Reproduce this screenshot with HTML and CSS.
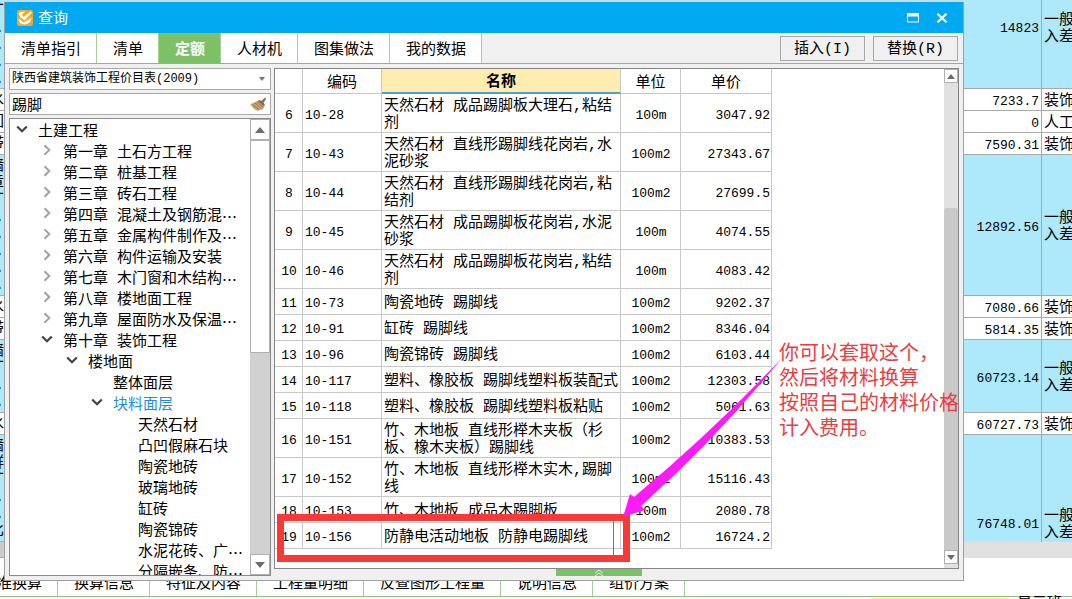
FILE: index.html
```html
<!DOCTYPE html>
<html lang="zh-CN">
<head>
<meta charset="utf-8">
<title>查询</title>
<link rel="stylesheet" href="styles.css">
</head>
<body>
<svg class="defs" aria-hidden="true">
  <symbol id="down" viewBox="0 0 12 12"><path d="M1.2 3.5 6 8.3 10.8 3.5" fill="none" stroke="#444" stroke-width="2.2"/></symbol>
  <symbol id="right" viewBox="0 0 12 12"><path d="M3.5 1.2 8.3 6 3.5 10.8" fill="none" stroke="#a2a2a2" stroke-width="2"/></symbol>
  <symbol id="tri-up" viewBox="0 0 10 6"><path d="M0 6 5 0l5 6z" fill="#6c6c6c"/></symbol>
  <symbol id="tri-down" viewBox="0 0 10 6"><path d="M0 0 5 6l5-6z" fill="#6c6c6c"/></symbol>
</svg>

<main class="app">
  <div class="sheet">
    <div class="edge">
      <div class="edge-cell cyan h89"><span>丁</span><span>.</span><span>.</span><span>.</span><span>.</span></div>
      <div class="edge-cell h22"><span>水</span></div>
      <div class="edge-cell h22"><span>回</span></div>
      <div class="edge-cell h22"><span>带</span></div>
      <div class="edge-cell cyan h141"><span>墙</span><span>章</span><span>丁</span><span>.</span><span>.</span><span>.</span><span>.</span><span>.</span></div>
      <div class="edge-cell h22"><span>水</span></div>
      <div class="edge-cell h22"><span>带</span></div>
      <div class="edge-cell cyan h73"><span>墙</span><span>丁</span><span>.</span><span>.</span></div>
      <div class="edge-cell h22"><span>水</span></div>
      <div class="edge-cell cyan h107"><span>墙</span><span>群</span><span>丁</span><span>.</span><span>.</span><span>比</span></div>
      <div class="edge-cell gray"></div>
    </div>
    <table class="costs">
      <tbody>
        <tr class="cyan h89 high"><td class="amount">14823</td><td>一般计<br>入差价</td></tr>
        <tr class="h22"><td class="amount">7233.7</td><td>装饰</td></tr>
        <tr class="h22"><td class="amount">0</td><td>人工</td></tr>
        <tr class="h22"><td class="amount">7590.31</td><td>装饰</td></tr>
        <tr class="cyan h141"><td class="amount">12892.56</td><td>一般计<br>入差价</td></tr>
        <tr class="h22"><td class="amount">7080.66</td><td>装饰</td></tr>
        <tr class="h22"><td class="amount">5814.35</td><td>装饰</td></tr>
        <tr class="cyan h73"><td class="amount">60723.14</td><td>一般计<br>入差价</td></tr>
        <tr class="h22"><td class="amount">60727.73</td><td>装饰</td></tr>
        <tr class="cyan h107 low"><td class="amount">76748.01</td><td>一般计<br>入差价</td></tr>
        <tr class="gray"><td></td><td></td></tr>
      </tbody>
    </table>
  </div>
  <nav class="strip">
    <button>标准换算</button><button>换算信息</button><button>特征及内容</button><button>工程量明细</button><button>反查图形工程量</button><button>说明信息</button><button>组价方案</button>
  </nav>
  <div class="subhead"><span class="mark"></span><span class="subtext">显示班</span></div>
</main>

<section class="dialog" role="dialog" aria-labelledby="title">
  <header class="titlebar">
    <svg class="logo" viewBox="0 0 16 16"><rect width="16" height="16" rx="2" fill="#f5a623"/><path d="M1.6 3.6C3 2 5.6 1.2 8.4 1.6L5 4.4 6.6 7 13.4 1.4 14.8 2.6 7.6 10.6 3.4 7.2z" fill="#fff"/><path d="M1.6 8.2 6.8 12.4 14.4 7.8C14.4 11.6 11.4 14.4 7.6 14.4 4 14.4 1.4 11.8 1.6 8.2z" fill="#fff"/></svg>
    <h1 id="title">查询</h1>
    <button class="winbtn" aria-label="最大化"><svg width="12" height="10" viewBox="0 0 12 10"><path d="M.5 1h11v8H.5z" fill="none" stroke="#fff"/><path d="M0 0h12v3.5H0z" fill="#fff"/></svg></button>
    <button class="winbtn" aria-label="关闭"><svg width="12" height="10" viewBox="0 0 12 10"><path d="m1.5.8 9 8.4m0-8.4-9 8.4" stroke="#fff" stroke-width="2.2"/></svg></button>
  </header>

  <div class="toolbar">
    <div class="tabs" role="tablist">
      <button role="tab">清单指引</button><button role="tab">清单</button><button role="tab" class="active" aria-selected="true">定额</button><button role="tab">人材机</button><button role="tab">图集做法</button><button role="tab">我的数据</button>
    </div>
    <div class="actions"><button>插入(I)</button><button>替换(R)</button></div>
  </div>

  <div class="content">
    <aside class="side">
      <div class="field">
        <select aria-label="定额库"><option>陕西省建筑装饰工程价目表(2009)</option></select>
        <svg class="caret" width="6" height="4"><path d="M0 0h6L3 4z" fill="#777"/></svg>
      </div>
      <div class="field">
        <input type="text" value="踢脚" aria-label="搜索">
        <button class="clear" aria-label="清除"><svg width="17" height="15" viewBox="0 0 17 15"><path d="m11 4.2 4-3.6 1.2 1.2-2.8 4.2z" fill="#7d756a"/><path d="M.4 7.2 8.6 3.2C11 2.8 15 6 14.6 8.6L13.2 12 7.4 13.8C4.6 12.6 1.8 10 .4 7.2z" fill="#c6a474"/><path d="M8.6 3.2C11 2.8 15 6 14.6 8.6L13 8.8 8 4z" fill="#8d6a48"/><path d="m2.6 7.2 6.2 5.6M5 6l6.2 5.6M7 5l6 5.2" stroke="#8a6a44" stroke-width=".8"/></svg></button>
      </div>
      <div class="treebox">
        <ul class="tree">
          <li><span class="node"><svg><use href="#down"/></svg>土建工程</span>
            <ul>
              <li><span class="node"><svg><use href="#right"/></svg>第一章 土石方工程</span></li>
              <li><span class="node"><svg><use href="#right"/></svg>第二章 桩基工程</span></li>
              <li><span class="node"><svg><use href="#right"/></svg>第三章 砖石工程</span></li>
              <li><span class="node"><svg><use href="#right"/></svg>第四章 混凝土及钢筋混<span class="more">…</span></span></li>
              <li><span class="node"><svg><use href="#right"/></svg>第五章 金属构件制作及<span class="more">…</span></span></li>
              <li><span class="node"><svg><use href="#right"/></svg>第六章 构件运输及安装</span></li>
              <li><span class="node"><svg><use href="#right"/></svg>第七章 木门窗和木结构<span class="more">…</span></span></li>
              <li><span class="node"><svg><use href="#right"/></svg>第八章 楼地面工程</span></li>
              <li><span class="node"><svg><use href="#right"/></svg>第九章 屋面防水及保温<span class="more">…</span></span></li>
              <li><span class="node"><svg><use href="#down"/></svg>第十章 装饰工程</span>
                <ul>
                  <li><span class="node"><svg><use href="#down"/></svg>楼地面</span>
                    <ul>
                      <li><span class="node leaf">整体面层</span></li>
                      <li><span class="node current"><svg><use href="#down"/></svg>块料面层</span>
                        <ul>
                          <li><span class="node leaf">天然石材</span></li>
                          <li><span class="node leaf">凸凹假麻石块</span></li>
                          <li><span class="node leaf">陶瓷地砖</span></li>
                          <li><span class="node leaf">玻璃地砖</span></li>
                          <li><span class="node leaf">缸砖</span></li>
                          <li><span class="node leaf">陶瓷锦砖</span></li>
                          <li><span class="node leaf">水泥花砖、广<span class="more">…</span></span></li>
                          <li><span class="node leaf">分隔嵌条、防<span class="more">…</span></span></li>
                        </ul>
                      </li>
                    </ul>
                  </li>
                </ul>
              </li>
            </ul>
          </li>
        </ul>
        <div class="scroll tree-scroll">
          <button aria-label="向上"><svg><use href="#tri-up"/></svg></button>
          <span class="thumb"></span><span class="track"></span>
          <button aria-label="向下"><svg><use href="#tri-down"/></svg></button>
        </div>
      </div>
    </aside>

    <div class="result">
      <div class="gridwrap">
        <table class="grid">
          <colgroup><col class="c-no"><col class="c-code"><col class="c-name"><col class="c-unit"><col class="c-price"></colgroup>
          <thead><tr><th></th><th>编码</th><th class="sorted">名称</th><th>单位</th><th>单价</th></tr></thead>
          <tbody>
            <tr><td>6</td><td>10-28</td><td>天然石材 成品踢脚板大理石,粘结剂</td><td>100m</td><td>3047.92</td></tr>
            <tr><td>7</td><td>10-43</td><td>天然石材 直线形踢脚线花岗岩,水泥砂浆</td><td>100m2</td><td>27343.67</td></tr>
            <tr><td>8</td><td>10-44</td><td>天然石材 直线形踢脚线花岗岩,粘结剂</td><td>100m2</td><td>27699.5</td></tr>
            <tr><td>9</td><td>10-45</td><td>天然石材 成品踢脚板花岗岩,水泥砂浆</td><td>100m</td><td>4074.55</td></tr>
            <tr><td>10</td><td>10-46</td><td>天然石材 成品踢脚板花岗岩,粘结剂</td><td>100m</td><td>4083.42</td></tr>
            <tr><td>11</td><td>10-73</td><td>陶瓷地砖 踢脚线</td><td>100m2</td><td>9202.37</td></tr>
            <tr><td>12</td><td>10-91</td><td>缸砖 踢脚线</td><td>100m2</td><td>8346.04</td></tr>
            <tr><td>13</td><td>10-96</td><td>陶瓷锦砖 踢脚线</td><td>100m2</td><td>6103.44</td></tr>
            <tr><td>14</td><td>10-117</td><td>塑料、橡胶板 踢脚线塑料板装配式</td><td>100m2</td><td>12303.58</td></tr>
            <tr><td>15</td><td>10-118</td><td>塑料、橡胶板 踢脚线塑料板粘贴</td><td>100m2</td><td>5061.63</td></tr>
            <tr><td>16</td><td>10-151</td><td>竹、木地板 直线形榉木夹板（杉板、橡木夹板）踢脚线</td><td>100m2</td><td>10383.53</td></tr>
            <tr><td>17</td><td>10-152</td><td>竹、木地板 直线形榉木实木,踢脚线</td><td>100m2</td><td>15116.43</td></tr>
            <tr><td>18</td><td>10-153</td><td>竹、木地板 成品木踢脚板</td><td>100m</td><td>2080.78</td></tr>
            <tr><td>19</td><td>10-156</td><td>防静电活动地板 防静电踢脚线</td><td>100m2</td><td>16724.2</td></tr>
          </tbody>
        </table>
      </div>
      <div class="scroll grid-scroll">
        <button aria-label="向上"><svg><use href="#tri-up"/></svg></button>
        <span class="track"></span><span class="thumb"></span>
        <button aria-label="向下"><svg><use href="#tri-down"/></svg></button>
      </div>
    </div>
  </div>
  <footer class="foot"><button aria-label="展开"><svg width="10" height="7" viewBox="0 0 10 7"><path d="m1 4 4-3 4 3M1 7l4-3 4 3" fill="none" stroke="#dff3d6"/></svg></button></footer>

  <div class="frame"><span></span></div>
  <svg class="arrow" width="162" height="162" viewBox="0 0 162 162"><path d="M1 160 8 137 12 140Q90 75 160 1 94 82 19 149L23 153z" fill="#fb1cf5"/></svg>
  <p class="note">你可以套取这个，<br>然后将材料换算<br>按照自己的材料价格<br>计入费用。</p>
</section>
</body>
</html>
```
FILE: styles.css
```css
* { box-sizing: border-box; }
body {
  margin: 0;
  height: 100vh;
  position: relative;
  overflow: hidden;
  background: #fff;
  color: #000;
  font: 400 15px/17px "Liberation Mono", "Noto Sans CJK SC", monospace;
}
button, input, select { font: inherit; color: inherit; margin: 0; padding: 0; border: 0; background: none; border-radius: 0; }
.defs { display: none; }
ul { list-style: none; margin: 0; padding: 0; }

/* sheet behind the dialog */
.app { background: #fff; }
.sheet { display: flex; justify-content: space-between; background: #c9dcda; }
.cyan { background: #ade8fb; }
.gray { background: #e1e1e1; height: 16px; }
.h22 { height: 22px; }
.h73 { height: 73px; }
.h89 { height: 89px; }
.h107 { height: 107px; }
.h141 { height: 141px; }
.edge { width: 4px; background: #fff; }
.edge-cell { overflow: hidden; display: flex; flex-direction: column; align-items: flex-end; justify-content: center; padding-top: 2px; border-bottom: 1px solid #aaa; }
.edge-cell.gray { background: #ccc; }
.costs { width: 109px; table-layout: fixed; border-collapse: separate; border-spacing: 0; background: #fff; }
.costs tr.cyan { background: #ade8fb; }
.costs tr.gray { background: #e1e1e1; }
.costs td { padding: 4px 2px 0; border-bottom: 1px solid #a8a8a8; white-space: nowrap; overflow: hidden; }
.costs .amount { width: 79px; border-right: 1px solid #a8a8a8; text-align: right; font-size: 13px; }
.costs .high td { vertical-align: top; padding-top: 12px; }
.costs .high .amount { padding-top: 20px; }
.costs .low td { vertical-align: bottom; border-bottom: 0; }
.costs .low .amount { padding-bottom: 9px; }
.costs .gray td { border: 0; padding: 0; }
.strip { display: flex; margin-left: -34px; padding-top: 12px; border-bottom: 1px solid #8fbf80; }
.strip button { height: 26px; padding: 3px 15px 0 16px; border-right: 1px solid #a5cf98; }
.subhead { display: flex; justify-content: flex-end; gap: 8px; height: 12px; padding-top: 1px; margin-right: 10px; }
.subtext { line-height: 14px; }
.mark { width: 137px; background: #fbf1a8; }

/* dialog */
.dialog {
  position: absolute;
  top: 2px; left: 4px; right: 108px; bottom: 18px;
  display: flex; flex-direction: column;
  background: #f0f0f0;
  border: 1px solid #a0a0a0;
  border-top: 0;
}
.titlebar { display: flex; align-items: center; height: 31px; padding: 0 14px 0 12px; background: #00a9f2; color: #fff; }
.logo { width: 16px; height: 16px; margin-right: 5px; }
h1 { flex: 1; margin: 0; padding-top: 4px; font: inherit; }
.winbtn { width: 14px; height: 20px; margin-left: 15px; display: grid; place-items: center; }
.toolbar { display: flex; justify-content: space-between; height: 31px; border-bottom: 1px solid #86bf74; }
.tabs { display: flex; }
.tabs button { padding: 4px 15px 0 16px; background: #fff; border-right: 1px solid #a4d294; white-space: nowrap; }
.tabs .active { background: #7cc166; color: #fff; font-weight: 700; }
.actions { display: flex; gap: 8px; padding: 3px 5px 2px 0; }
.actions button { width: 85px; padding-top: 2px; border: 1px solid #a8a8a8; }

.content { flex: 1; min-height: 0; display: flex; gap: 3px; padding: 4px 4px 0; }
.side { width: 262px; display: flex; flex-direction: column; gap: 3px; }
.field { display: flex; align-items: center; height: 22px; border: 1px solid #a8a8a8; background: #fff; padding-left: 2px; }
.field select { flex: 1; min-width: 0; height: 20px; padding-top: 1px; appearance: none; font-size: 12px; }
.field input { flex: 1; min-width: 0; height: 20px; }
.caret { margin-right: 5px; }
.clear { width: 20px; height: 16px; }
.clear svg { display: block; }
.treebox { flex: 1; min-height: 0; display: flex; border: 1px solid #8c8c8c; background: #fff; }
.tree { flex: 1; min-width: 0; height: 100%; overflow: hidden; padding: 3px 0 0 5px; }
.tree ul { padding-left: 25px; }
.node { display: flex; align-items: center; height: 21px; white-space: nowrap; }
.node svg { width: 12px; height: 12px; margin: 0 10px 8px 1px; flex: none; }
.leaf { padding-left: 23px; }
.more { font-family: "Noto Sans CJK SC", sans-serif; }
.current { color: #1c8ce8; }
.scroll { display: flex; flex-direction: column; flex: none; }
.scroll button { display: grid; place-items: center; flex: none; background: #fff; border: 1px solid #b0b0b0; }
.scroll svg { width: 10px; height: 6px; }
.tree-scroll { width: 20px; }
.tree-scroll button { height: 21px; }
.tree-scroll .thumb { flex: 212; border: 1px solid #b0b0b0; background: #fff; }
.tree-scroll .track { flex: 202; background: #d1d1d1; }

.result { flex: 1; min-width: 0; display: flex; justify-content: space-between; margin-bottom: 7px; border: 1px solid #858589; background: #fff; }
.gridwrap { min-width: 0; overflow: hidden; }
.grid { width: 497px; table-layout: fixed; border-collapse: separate; border-spacing: 0; }
.c-no { width: 28px; }
.c-code { width: 79px; }
.c-name { width: 239px; }
.c-unit { width: 60px; }
.c-price { width: 91px; }
.grid th, .grid td { border-right: 1px solid #c8c8c8; border-bottom: 1px solid #c8c8c8; }
.grid th { height: 25px; padding: 4px 0 0; font-weight: 400; }
.grid th.sorted { background: #ffedb0; border-bottom: 2px solid #4aa3c8; font-weight: 700; }
.grid td { height: 26px; padding: 4px 1px 0 2px; font-size: 13px; }
.grid td:nth-child(1), .grid td:nth-child(4) { text-align: center; }
.grid td:nth-child(3) { font-size: 15px; padding-right: 0; }
.grid td:nth-child(5) { text-align: right; }
.grid-scroll { width: 14px; padding-bottom: 4px; background: #e1e1e1; }
.grid-scroll button { height: 14px; }
.grid-scroll svg { width: 8px; height: 5px; }
.grid-scroll .track { flex: 125; }
.grid-scroll .thumb { flex: 342; background: #c9c9c9; border-radius: 3px 3px 0 0; }

.foot { height: 4px; padding-left: 551px; }
.foot button { position: relative; top: -7px; width: 86px; height: 7px; display: grid; place-items: center; background: #7cc166; }
.foot svg { display: block; }

/* callout drawn over the dialog */
.frame { position: absolute; left: 272px; top: 512px; width: 353px; height: 48px; border: 7px solid #f93838; }
.frame span { display: block; width: 330px; height: 34px; border-right: 1px solid #e04848; }
.arrow { position: absolute; left: 617px; top: 355px; }
.note { position: absolute; left: 774px; top: 340px; margin: 0; color: #ee3b40; font-size: 20px; line-height: 25px; white-space: nowrap; }
```
